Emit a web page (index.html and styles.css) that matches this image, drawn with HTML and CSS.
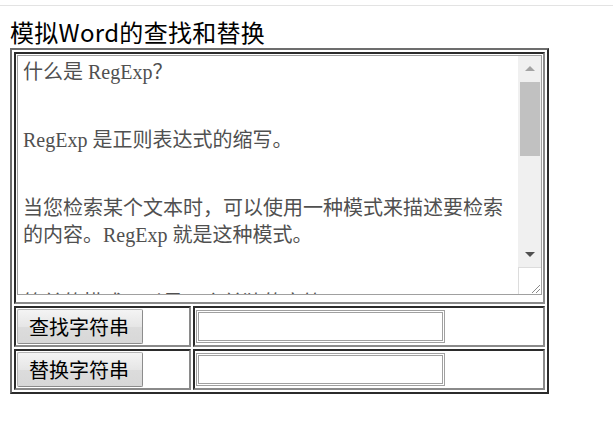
FILE: index.html
```html
<!DOCTYPE html>
<html lang="zh-CN">
<head>
    <meta charset="UTF-8">
    <meta name="viewport" content="width=device-width, initial-scale=1.0">
    <title>模拟Word的查找和替换</title>
    <link rel="stylesheet" href="styles.css">
</head>
<body>
    <div class="topline"></div>
    <div class="page">
        <h1 class="title">模拟Word的查找和替换</h1>

        <table class="panel">
            <tr>
                <td colspan="2" class="editor-cell">
                    <div class="editor">
                        <div class="editor-text">
                            <p>什么是 RegExp？</p>
                            <p>RegExp 是正则表达式的缩写。</p>
                            <p>当您检索某个文本时，可以使用一种模式来描述要检索<br>的内容。RegExp 就是这种模式。</p>
                            <p>简单的模式可以是一个单独的字符。</p>
                        </div>
                        <div class="scrollbar">
                            <div class="sb-track">
                                <span class="sb-arrow up"></span>
                                <span class="sb-thumb"></span>
                                <span class="sb-arrow down"></span>
                            </div>
                            <div class="sb-corner">
                                <svg width="12" height="12" viewBox="0 0 12 12">
                                    <path d="M11 3 L3 11 M11 7 L7 11" stroke="#8a8a8a" stroke-width="1" fill="none"/>
                                </svg>
                            </div>
                        </div>
                    </div>
                </td>
            </tr>
            <tr>
                <td class="btn-cell"><button class="btn">查找字符串</button></td>
                <td class="input-cell"><input type="text" class="field"></td>
            </tr>
            <tr>
                <td class="btn-cell"><button class="btn">替换字符串</button></td>
                <td class="input-cell"><input type="text" class="field"></td>
            </tr>
        </table>
    </div>
</body>
</html>
```

FILE: styles.css
```css
* {
    box-sizing: border-box;
}

body {
    margin: 0;
    background: #fff;
    color: #000;
    font-family: "Noto Sans CJK SC", sans-serif;
}

.topline {
    height: 6px;
    border-bottom: 1px solid #e3e3e3;
}

.page {
    padding: 10px 10px 0;
}

.title {
    margin: 0;
    font-size: 24px;
    font-weight: normal;
    line-height: 32px;
    letter-spacing: 0.3px;
}

/* Table */
.panel {
    width: 539px;
    border-collapse: separate;
    border-spacing: 2px;
    border: 2px solid;
    border-color: #6d6d6d #2b2b2b #2b2b2b #6d6d6d;
}

.panel td {
    padding: 1px;
    border: 2px solid;
    border-color: #2b2b2b #8a8a8a #8a8a8a #2b2b2b;
}

.btn-cell {
    width: 177px;
}

/* Textarea look */
.editor {
    display: flex;
    height: 240px;
    margin-bottom: 6px;
    border: 1px solid #a0a0a0;
    background: #fff;
}

.editor-text {
    flex: 1;
    overflow: hidden;
    padding: 3px 0 0 5px;
    font-family: "Liberation Serif", "Noto Sans CJK SC", serif;
    font-size: 20px;
    line-height: 27px;
    color: #505050;
    white-space: nowrap;
}

.editor-text p {
    margin: 0 0 41px;
}

.scrollbar {
    width: 23px;
    display: flex;
    flex-direction: column;
}

.sb-track {
    flex: 1;
    background: #f0f0f0;
    display: flex;
    flex-direction: column;
    align-items: center;
}

.sb-arrow {
    width: 0;
    height: 0;
    border-left: 5px solid transparent;
    border-right: 5px solid transparent;
}

.sb-arrow.up {
    margin-top: 10px;
    border-bottom: 5px solid #a3a3a3;
}

.sb-arrow.down {
    margin-top: auto;
    margin-bottom: 10px;
    border-top: 5px solid #505050;
}

.sb-thumb {
    width: 20px;
    height: 74px;
    margin-top: 11px;
    background: #c1c1c1;
}

.sb-corner {
    height: 27px;
    border-top: 1px solid #dcdcdc;
    border-left: 1px solid #dcdcdc;
    display: flex;
    align-items: flex-end;
    justify-content: flex-end;
}

.sb-corner svg {
    display: block;
}

/* Buttons and inputs */
.btn {
    display: block;
    width: 126px;
    height: 35px;
    padding: 0 11px;
    border: 1px solid #a6a6a6;
    border-color: #b5b5b5 #8c8c8c #8c8c8c #b5b5b5;
    border-radius: 2px;
    background: linear-gradient(#f4f4f4, #e6e6e6 50%, #dcdcdc 51%, #d8d8d8);
    font-family: "Noto Sans CJK SC", sans-serif;
    font-size: 20px;
    color: #000;
    text-align: left;
}

.field {
    display: block;
    width: 249px;
    height: 33px;
    border: 3px double #a0a0a0;
    background: #fff;
    outline: none;
}
```
